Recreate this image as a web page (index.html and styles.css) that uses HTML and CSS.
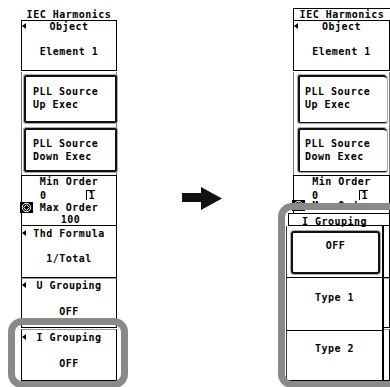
FILE: index.html
```html
<!DOCTYPE html>
<html>
<head>
<meta charset="utf-8">
<link rel="stylesheet" href="styles.css">
</head>
<body>
<div class="stage">
  <div class="panel">
    <div class="title">IEC Harmonics</div>
    <div class="sec sec-obj">
      <div class="row"><i class="tri"></i><span>Object</span></div>
      <div class="val val-gap14">Element 1</div>
    </div>
    <div class="sec sec-btn1"><div class="btn btn1">PLL Source<br>Up Exec</div></div>
    <div class="sec sec-btn2"><div class="btn btn2">PLL Source<br>Down Exec</div></div>
    <div class="sec sec-mm">
      <div class="val">Min Order</div>
      <div class="mm-vals"><span>0</span><span class="cur">1</span></div>
      <div class="row row-max"><svg class="knob" width="13" height="11" viewBox="0 0 13 11"><rect width="13" height="11" fill="#000"/><circle cx="6.5" cy="5.5" r="4.2" fill="none" stroke="#fff" stroke-width="1"/><path d="M6.5 2.6 L9.4 5.5 L6.5 8.4 L3.6 5.5Z" fill="none" stroke="#fff" stroke-width="1"/></svg><span>Max Order</span></div>
      <div class="val val-100"><span class="ul">100</span></div>
    </div>
    <div class="sec sec-thd">
      <div class="row"><i class="tri"></i><span>Thd Formula</span></div>
      <div class="val val-gap14">1/Total</div>
    </div>
    <div class="sec sec-u">
      <div class="row"><i class="tri"></i><span>U Grouping</span></div>
      <div class="val val-gap15">OFF</div>
    </div>
    <div class="sec sec-i">
      <div class="row"><i class="tri"></i><span>I Grouping</span></div>
      <div class="val val-gap15">OFF</div>
    </div>
  </div>

  <div class="arrow">
    <svg width="40" height="23" viewBox="0 0 40 23"><path d="M0 6 H19 V0 L40 11.5 L19 23 V15 H0 Z" fill="#111"/></svg>
  </div>

  <div class="panel panel-r">
    <div class="title">IEC Harmonics</div>
    <div class="sec sec-obj">
      <div class="row"><i class="tri"></i><span>Object</span></div>
      <div class="val val-gap14">Element 1</div>
    </div>
    <div class="sec sec-btn1"><div class="btn btn1">PLL Source<br>Up Exec</div></div>
    <div class="sec sec-btn2"><div class="btn btn2">PLL Source<br>Down Exec</div></div>
    <div class="sec sec-mm">
      <div class="val">Min Order</div>
      <div class="mm-vals"><span>0</span><span class="cur">1</span></div>
      <div class="row row-max"><svg class="knob" width="13" height="11" viewBox="0 0 13 11"><rect width="13" height="11" fill="#000"/><circle cx="6.5" cy="5.5" r="4.2" fill="none" stroke="#fff" stroke-width="1"/><path d="M6.5 2.6 L9.4 5.5 L6.5 8.4 L3.6 5.5Z" fill="none" stroke="#fff" stroke-width="1"/></svg><span>Max Order</span></div>
    </div>
    <div class="sec sec-thd"></div>
    <div class="sec sec-u"></div>
    <div class="sec sec-i"></div>
  </div>

  <div class="popup">
    <div class="p-title">I Grouping</div>
    <div class="p-sec p-off"><div class="btn p-btn">OFF</div></div>
    <div class="p-sec p-type1">Type 1</div>
    <div class="p-sec p-type2">Type 2</div>
  </div>

  <div class="hl hl-left"></div>
  <div class="hl hl-right"></div>
</div>
</body>
</html>
```

FILE: styles.css
```css
* { box-sizing: border-box; }

body {
  margin: 0;
  background: #fff;
  color: #000;
  font-family: "DejaVu Sans Mono", "Liberation Mono", monospace;
  font-weight: bold;
  font-size: 10px;
  letter-spacing: 0.5px;
  overflow: hidden;
}

.stage {
  position: relative;
  width: 390px;
  height: 387px;
  overflow: hidden;
  display: flex;
  align-items: flex-start;
}

.panel {
  width: 96px;
  margin-left: 21px;
  margin-top: 8px;
  display: flex;
  flex-direction: column;
}

.panel-r {
  width: 97px;
  margin-left: 71px;
}

.title {
  height: 13px;
  padding-top: 1px;
  line-height: 11px;
  text-align: center;
  border-bottom: 1px solid #000;
  white-space: nowrap;
}

.panel-r .title {
  padding-top: 0;
  border-top: 1px solid #000;
  border-left: 1px solid #000;
}

.sec {
  border-left: 1px solid #000;
  border-right: 1px solid #000;
}

.sec-obj { height: 50px; border-bottom: 1px solid #000; }
.sec-btn1 { height: 54px; margin-top: 1px; border-left-color: #777; border-right-color: #777; }
.sec-btn2 { height: 49px; border-left-color: #777; border-right-color: #777; }
.sec-mm { height: 51px; border-top: 1px solid #000; border-bottom: 1px solid #000; }
.sec-thd { height: 52px; padding-top: 2px; border-bottom: 1px solid #000; }
.sec-u { height: 50px; padding-top: 1px; border-top: 1px solid #999; border-bottom: 1px solid #000; }
.sec-i { height: 52px; margin-top: 1px; padding-top: 2px; border-top: 1px solid #999; border-bottom: 1px solid #000; }

.panel-r .row-max { margin-top: -1px; }

.row {
  display: grid;
  grid-template-columns: 1fr auto 1fr;
  height: 11px;
  line-height: 11px;
  white-space: nowrap;
}
.row > span { grid-column: 2; }

.tri {
  grid-column: 1;
  grid-row: 1;
  justify-self: start;
  margin-top: 2px;
  width: 0;
  height: 0;
  border-right: 4px solid #000;
  border-top: 3px solid transparent;
  border-bottom: 3px solid transparent;
}

.knob {
  grid-column: 1;
  grid-row: 1;
  justify-self: start;
  margin-left: -2px;
  display: block;
}

.val {
  height: 11px;
  line-height: 11px;
  text-align: center;
  white-space: nowrap;
}
.val-gap14 { margin-top: 14px; }
.val-gap15 { margin-top: 15px; }

.mm-vals {
  display: flex;
  justify-content: space-between;
  height: 11px;
  line-height: 11px;
  margin-top: 3px;
  padding: 0 21px 0 18px;
}
.cur {
  display: inline-block;
  height: 10px;
  line-height: 10px;
  padding-left: 1px;
  border-left: 1px solid #000;
  border-top: 1px solid #000;
}

.row-max { margin-top: 1px; }
.val-100 { margin-top: 1px; padding-right: 4px; }
.ul {
  display: inline-block;
  height: 11px;
  line-height: 10px;
  padding-left: 7px;
  border-bottom: 1px solid #000;
}

.btn {
  border: 2px solid #111;
  box-shadow: 0 0 0 1px #aaa;
  border-radius: 2px;
  line-height: 13px;
  padding-left: 7px;
  white-space: nowrap;
}
.btn1 { height: 48px; margin: 3px -1px 0 2px; padding-top: 8px; }
.btn2 { height: 44px; margin: 2px -1px 0 2px; padding-top: 7px; }

.panel-r .btn {
  margin-left: 4px;
  margin-right: 2px;
  padding-left: 5px;
  border-right-width: 0;
  border-bottom-width: 1px;
  border-top-right-radius: 4px;
}

.arrow {
  margin-left: 65px;
  margin-top: 187px;
  width: 40px;
  height: 23px;
}
.arrow svg { display: block; }

.popup {
  position: absolute;
  left: 286px;
  top: 213px;
  width: 98px;
  height: 168px;
  background: #fff;
  display: flex;
  flex-direction: column;
}

.p-title {
  height: 13px;
  margin-left: 2px;
  margin-right: -6px;
  padding-top: 3px;
  padding-right: 10px;
  line-height: 9px;
  text-align: center;
  border-top: 1px solid #000;
  border-left: 1px solid #000;
  border-bottom: 1px solid #000;
  white-space: nowrap;
}

.p-sec {
  border-left: 1px solid #333;
  border-right: 2px solid #000;
  border-bottom: 1px solid #000;
  text-align: center;
  line-height: 11px;
  white-space: nowrap;
}
.p-off { height: 52px; }
.p-type1 { height: 53px; padding-top: 14px; }
.p-type2 { height: 50px; padding-top: 12px; }

.p-btn {
  height: 43px;
  width: 89px;
  margin: 5px 0 0 4px;
  padding: 7px 0 0 0;
  line-height: 11px;
  text-align: center;
  border-radius: 3px;
}

.hl {
  position: absolute;
  border: 7px solid #8a8a8a;
  border-radius: 14px;
}
.hl-left { left: 8px; top: 318px; width: 120px; height: 70px; }
.hl-right { left: 278px; top: 203px; width: 130px; height: 185px; }
```
